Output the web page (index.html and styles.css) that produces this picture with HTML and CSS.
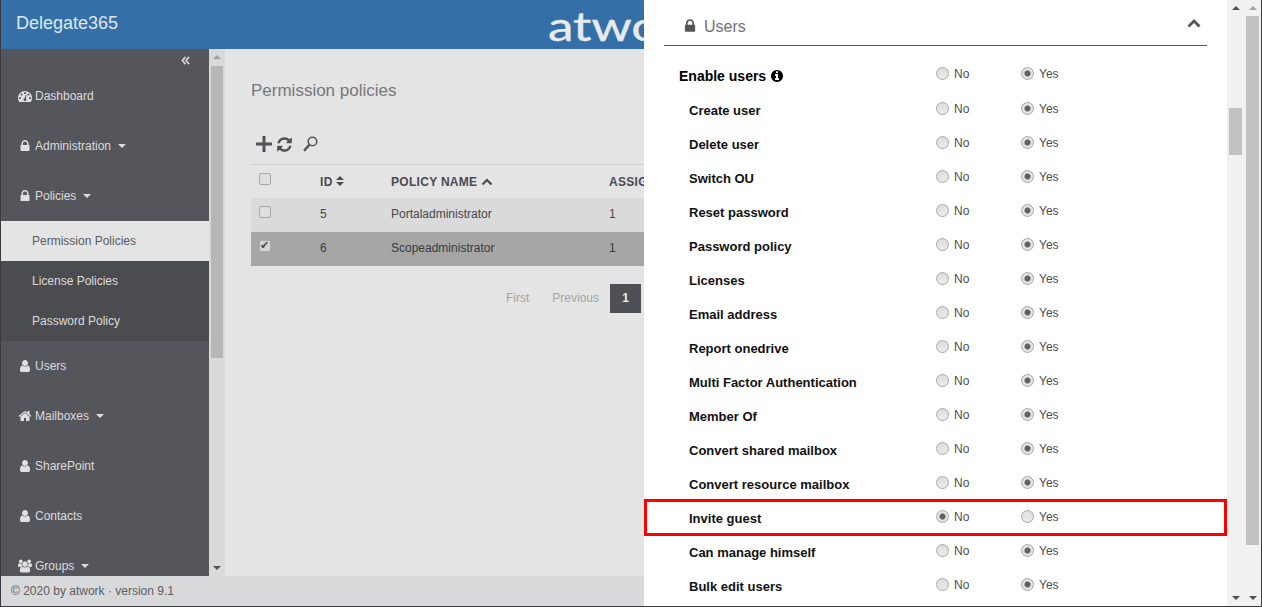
FILE: index.html
```html
<!DOCTYPE html>
<html lang="en">
<head>
<meta charset="utf-8">
<title>Delegate365 - Permission policies</title>
<link rel="stylesheet" href="styles.css">
</head>
<body>
<svg class="defs" aria-hidden="true">
  <symbol id="i-lock" viewBox="0 0 1792 1792"><path d="M640 768h512v-192q0-106-75-181t-181-75-181 75-75 181v192zm832 96v576q0 40-28 68t-68 28h-960q-40 0-68-28t-28-68v-576q0-40 28-68t68-28h32v-192q0-184 132-316t316-132 316 132 132 316v192h32q40 0 68 28t28 68z"/></symbol>
  <symbol id="i-user" viewBox="0 0 1792 1792"><path d="M1536 1399q0 109-62.500 187t-150.500 78h-854q-88 0-150.500-78t-62.500-187q0-85 8.500-160.500t31.500-152 58.500-131 94-89 134.500-34.500q131 128 313 128t313-128q76 0 134.500 34.500t94 89 58.500 131 31.500 152 8.500 160.500zm-256-887q0 159-112.500 271.500t-271.500 112.500-271.500-112.500-112.500-271.500 112.500-271.500 271.500-112.500 271.500 112.500 112.500 271.500z"/></symbol>
  <symbol id="i-home" viewBox="0 0 1792 1792"><path d="M1472 992v480q0 26-19 45t-45 19h-384v-384h-256v384h-384q-26 0-45-19t-19-45v-480q0-1 .5-3t.5-3l575-474 575 474q1 2 1 6zm223-69l-62 74q-8 9-21 11h-3q-13 0-21-7l-692-577-692 577q-12 8-24 7-13-2-21-11l-62-74q-8-10-7-23.500t11-21.500l719-599q32-26 76-26t76 26l244 204v-195q0-14 9-23t23-9h192q14 0 23 9t9 23v408l219 182q10 8 11 21.500t-7 23.500z"/></symbol>
  <symbol id="i-group" viewBox="0 0 1920 1792"><path d="M593 896q-162 5-265 128h-134q-82 0-138-40.500t-56-118.500q0-353 124-353 6 0 43.500 21t97.500 42.500 119 21.500q67 0 133-23-5 37-5 66 0 139 81 256zm1071 637q0 120-73 189.500t-194 69.500h-874q-121 0-194-69.500t-73-189.500q0-53 3.500-103.500t14-109 26.500-108.500 43-97.500 62-81 85.500-53.500 111.500-20q10 0 43 21.500t73 48 107 48 135 21.500 135-21.500 107-48 73-48 43-21.500q61 0 111.500 20t85.500 53.500 62 81 43 97.500 26.500 108.500 14 109 3.500 103.500zm-1024-1277q0 106-75 181t-181 75-181-75-75-181 75-181 181-75 181 75 75 181zm704 384q0 159-112.500 271.500t-271.500 112.500-271.500-112.500-112.500-271.500 112.500-271.500 271.500-112.500 271.500 112.500 112.500 271.500zm576 225q0 78-56 118.500t-138 40.500h-134q-103-123-265-128 81-117 81-256 0-29-5-66 66 23 133 23 59 0 119-21.500t97.500-42.500 43.500-21q124 0 124 353zm-128-609q0 106-75 181t-181 75-181-75-75-181 75-181 181-75 181 75 75 181z"/></symbol>
  <symbol id="i-dash" viewBox="0 0 1792 1792"><path d="M384 1152q0-53-37.500-90.500t-90.500-37.500-90.500 37.500-37.500 90.500 37.500 90.500 90.500 37.500 90.500-37.500 37.500-90.500zm192-448q0-53-37.500-90.500t-90.500-37.500-90.500 37.500-37.500 90.500 37.500 90.500 90.500 37.500 90.500-37.500 37.500-90.500zm428 481l101-382q6-26-7.500-48.500t-38.500-29.500-48 6.500-30 39.500l-101 382q-60 5-107 43.500t-63 98.500q-20 77 20 146t117 89 146-20 89-117q16-60-6-117t-72-91zm660-33q0-53-37.500-90.500t-90.500-37.500-90.500 37.500-37.500 90.500 37.500 90.500 90.500 37.500 90.500-37.500 37.500-90.500zm-640-640q0-53-37.500-90.500t-90.500-37.500-90.500 37.500-37.500 90.500 37.500 90.500 90.500 37.500 90.500-37.500 37.500-90.500zm448 192q0-53-37.500-90.500t-90.500-37.500-90.500 37.500-37.500 90.500 37.500 90.500 90.500 37.500 90.500-37.500 37.500-90.500zm320 448q0 261-141 483-19 29-54 29h-1402q-35 0-54-29-141-221-141-483 0-182 71-348t191-286 286-191 348-71 348 71 286 191 191 286 71 348z"/></symbol>
  <symbol id="i-refresh" viewBox="0 0 1792 1792"><path d="M1639 1056q0 5-1 7-64 268-268 434.500t-478 166.500q-146 0-282.500-55t-243.500-157l-129 129q-19 19-45 19t-45-19-19-45v-448q0-26 19-45t45-19h448q26 0 45 19t19 45-19 45l-137 137q71 66 161 102t187 36q134 0 250-65t186-179q11-17 53-117 8-23 30-23h192q13 0 22.500 9.500t9.500 22.500zm25-800v448q0 26-19 45t-45 19h-448q-26 0-45-19t-19-45 19-45l138-138q-148-137-349-137-134 0-250 65t-186 179q-11 17-53 117-8 23-30 23h-199q-13 0-22.500-9.500t-9.500-22.500v-7q65-268 270-434.500t480-166.500q146 0 284 55.500t245 156.500l130-129q19-19 45-19t45 19 19 45z"/></symbol>
  <symbol id="i-info" viewBox="0 0 1792 1792"><path d="M1152 1376v-160q0-14-9-23t-23-9h-96v-512q0-14-9-23t-23-9h-320q-14 0-23 9t-9 23v160q0 14 9 23t23 9h96v320h-96q-14 0-23 9t-9 23v160q0 14 9 23t23 9h448q14 0 23-9t9-23zm-128-896v-160q0-14-9-23t-23-9h-192q-14 0-23 9t-9 23v160q0 14 9 23t23 9h192q14 0 23-9t9-23zm640 416q0 209-103 385.500t-279.500 279.500-385.500 103-385.500-103-279.500-279.500-103-385.500 103-385.500 279.500-279.500 385.500-103 385.500 103 279.500 279.500 103 385.500z"/></symbol>
</svg>

<div class="window">
  <div class="main">
    <header class="topbar">
      <div class="brand">Delegate365</div>
      <div class="logo">atwork</div>
    </header>
    <div class="workspace">
      <nav class="sidebar">
        <div class="collapse">
          <svg class="collapse-icon" viewBox="0 0 10 10"><path d="M5 1 1.500 5 5 9M9 1 5.500 5 9 9"/></svg>
        </div>
        <a class="nav-item"><svg class="nav-icon"><use href="#i-dash"/></svg>Dashboard</a>
        <a class="nav-item"><svg class="nav-icon"><use href="#i-lock"/></svg>Administration<i class="caret"></i></a>
        <a class="nav-item"><svg class="nav-icon"><use href="#i-lock"/></svg>Policies<i class="caret"></i></a>
        <div class="submenu">
          <a class="sub-item active">Permission Policies</a>
          <a class="sub-item">License Policies</a>
          <a class="sub-item">Password Policy</a>
        </div>
        <a class="nav-item"><svg class="nav-icon"><use href="#i-user"/></svg>Users</a>
        <a class="nav-item"><svg class="nav-icon"><use href="#i-home"/></svg>Mailboxes<i class="caret"></i></a>
        <a class="nav-item"><svg class="nav-icon"><use href="#i-user"/></svg>SharePoint</a>
        <a class="nav-item"><svg class="nav-icon"><use href="#i-user"/></svg>Contacts</a>
        <a class="nav-item"><svg class="nav-icon"><use href="#i-group"/></svg>Groups<i class="caret"></i></a>
      </nav>
      <div class="scrollbar sb-side">
        <i class="arrow up"></i>
        <div class="track"><div class="thumb"></div></div>
        <i class="arrow down"></i>
      </div>
      <main class="content">
        <h1 class="page-title">Permission policies</h1>
        <div class="toolbar">
          <svg class="tool tool-plus" viewBox="0 0 16 16"><path d="M8 0v16M0 8h16"/></svg>
          <svg class="tool tool-refresh"><use href="#i-refresh"/></svg>
          <svg class="tool tool-search" viewBox="0 0 15 16"><circle cx="9.500" cy="5.500" r="4.300"/><path class="handle" d="M6.200 9 1.800 14"/></svg>
        </div>
        <table class="grid">
          <thead>
            <tr>
              <th class="c-check"><input type="checkbox" class="check" disabled></th>
              <th class="c-id">ID <svg class="sort" viewBox="0 0 8 10"><path d="M4 0 8 4H0zM4 10 0 6h8z"/></svg></th>
              <th class="c-name">POLICY NAME <svg class="sort-up" viewBox="0 0 12 8"><path d="M1.500 6.500 6 2l4.500 4.500"/></svg></th>
              <th class="c-assign">ASSIGNED</th>
            </tr>
          </thead>
          <tbody>
            <tr class="odd">
              <td><input type="checkbox" class="check" disabled></td>
              <td>5</td><td>Portaladministrator</td><td>1</td>
            </tr>
            <tr class="selected">
              <td><input type="checkbox" class="check" disabled checked></td>
              <td>6</td><td>Scopeadministrator</td><td>1</td>
            </tr>
          </tbody>
        </table>
        <div class="pager">
          <a class="page-link">First</a>
          <a class="page-link">Previous</a>
          <a class="page-current">1</a>
        </div>
      </main>
    </div>
    <footer class="footer">© 2020 by atwork · version 9.1</footer>
  </div>

  <aside class="panel">
    <div class="panel-head">
      <svg class="panel-lock"><use href="#i-lock"/></svg>
      <span class="panel-title">Users</span>
      <svg class="panel-chevron" viewBox="0 0 14 10"><path d="M1.500 8.500 7 3l5.500 5.500"/></svg>
    </div>
    <form class="perms">
      <div class="perm perm-main"><span class="perm-label">Enable users <svg class="info"><use href="#i-info"/></svg></span>
        <label class="opt"><input class="radio" type="radio" name="r0" disabled>No</label>
        <label class="opt"><input class="radio" type="radio" name="r0" disabled checked>Yes</label></div>
      <div class="perm"><span class="perm-label">Create user</span>
        <label class="opt"><input class="radio" type="radio" name="r1" disabled>No</label>
        <label class="opt"><input class="radio" type="radio" name="r1" disabled checked>Yes</label></div>
      <div class="perm"><span class="perm-label">Delete user</span>
        <label class="opt"><input class="radio" type="radio" name="r2" disabled>No</label>
        <label class="opt"><input class="radio" type="radio" name="r2" disabled checked>Yes</label></div>
      <div class="perm"><span class="perm-label">Switch OU</span>
        <label class="opt"><input class="radio" type="radio" name="r3" disabled>No</label>
        <label class="opt"><input class="radio" type="radio" name="r3" disabled checked>Yes</label></div>
      <div class="perm"><span class="perm-label">Reset password</span>
        <label class="opt"><input class="radio" type="radio" name="r4" disabled>No</label>
        <label class="opt"><input class="radio" type="radio" name="r4" disabled checked>Yes</label></div>
      <div class="perm"><span class="perm-label">Password policy</span>
        <label class="opt"><input class="radio" type="radio" name="r5" disabled>No</label>
        <label class="opt"><input class="radio" type="radio" name="r5" disabled checked>Yes</label></div>
      <div class="perm"><span class="perm-label">Licenses</span>
        <label class="opt"><input class="radio" type="radio" name="r6" disabled>No</label>
        <label class="opt"><input class="radio" type="radio" name="r6" disabled checked>Yes</label></div>
      <div class="perm"><span class="perm-label">Email address</span>
        <label class="opt"><input class="radio" type="radio" name="r7" disabled>No</label>
        <label class="opt"><input class="radio" type="radio" name="r7" disabled checked>Yes</label></div>
      <div class="perm"><span class="perm-label">Report onedrive</span>
        <label class="opt"><input class="radio" type="radio" name="r8" disabled>No</label>
        <label class="opt"><input class="radio" type="radio" name="r8" disabled checked>Yes</label></div>
      <div class="perm"><span class="perm-label">Multi Factor Authentication</span>
        <label class="opt"><input class="radio" type="radio" name="r9" disabled>No</label>
        <label class="opt"><input class="radio" type="radio" name="r9" disabled checked>Yes</label></div>
      <div class="perm"><span class="perm-label">Member Of</span>
        <label class="opt"><input class="radio" type="radio" name="r10" disabled>No</label>
        <label class="opt"><input class="radio" type="radio" name="r10" disabled checked>Yes</label></div>
      <div class="perm"><span class="perm-label">Convert shared mailbox</span>
        <label class="opt"><input class="radio" type="radio" name="r11" disabled>No</label>
        <label class="opt"><input class="radio" type="radio" name="r11" disabled checked>Yes</label></div>
      <div class="perm"><span class="perm-label">Convert resource mailbox</span>
        <label class="opt"><input class="radio" type="radio" name="r12" disabled>No</label>
        <label class="opt"><input class="radio" type="radio" name="r12" disabled checked>Yes</label></div>
      <div class="perm perm-flagged"><span class="perm-label">Invite guest</span>
        <label class="opt"><input class="radio" type="radio" name="r13" disabled checked>No</label>
        <label class="opt"><input class="radio" type="radio" name="r13" disabled>Yes</label></div>
      <div class="perm"><span class="perm-label">Can manage himself</span>
        <label class="opt"><input class="radio" type="radio" name="r14" disabled>No</label>
        <label class="opt"><input class="radio" type="radio" name="r14" disabled checked>Yes</label></div>
      <div class="perm"><span class="perm-label">Bulk edit users</span>
        <label class="opt"><input class="radio" type="radio" name="r15" disabled>No</label>
        <label class="opt"><input class="radio" type="radio" name="r15" disabled checked>Yes</label></div>
    </form>
  </aside>
  <div class="scrollbar sb-panel">
    <i class="arrow up"></i>
    <div class="track"><div class="thumb"></div></div>
    <i class="arrow down"></i>
  </div>
  <div class="scrollbar sb-page">
    <i class="arrow up"></i>
    <div class="track"><div class="thumb"></div></div>
    <i class="arrow down"></i>
  </div>
</div>
</body>
</html>
```
FILE: styles.css
```css
* { box-sizing: border-box; }
html, body { height: 100%; }
body {
  margin: 0;
  padding: 0 1px 1px;
  background: #3a3a3f;
  overflow: hidden;
  font-family: "Liberation Sans", Arial, sans-serif;
  font-size: 12px;
}
.defs { display: none; }
.window { display: flex; height: 606px; width: 1260px; }

/* left page under the panel */
.main { width: 643px; height: 606px; display: flex; flex-direction: column; overflow: hidden; flex: none; }
.topbar { height: 49px; flex: none; display: flex; align-items: center; background: #3470a7; overflow: hidden; }
.brand { flex: 0 0 547px; padding-left: 15px; font-size: 18px; color: #dfe6ee; margin-top: -2px; }
.logo { flex: none; font-family: Lato, sans-serif; font-size: 40px; line-height: 49px; margin-top: 4px; color: #e6ebef; -webkit-text-stroke: .4px #e6ebef; transform-origin: left center; transform: scaleX(1.28); }

.workspace { flex: 1; min-height: 0; display: flex; }
.sidebar { width: 208px; flex: none; background: #55565b; overflow: hidden; }
.collapse { height: 22px; display: flex; justify-content: flex-end; align-items: center; padding-right: 19px; }
.collapse-icon { width: 9px; height: 9px; fill: none; stroke: #d8d8d8; stroke-width: 1.800; }
.nav-item { height: 50px; display: flex; align-items: center; padding-left: 16.500px; color: #dcdcdc; white-space: nowrap; }
.nav-icon { width: 14px; height: 14px; margin-right: 3.500px; fill: #e0e0e0; flex: none; }
.caret { width: 0; height: 0; margin-left: 7px; border: 4.500px solid transparent; border-top-color: #dcdcdc; border-bottom: 0; }
.submenu { background: #4b4c50; }
.sub-item { height: 40px; display: flex; align-items: center; padding-left: 31px; color: #dcdcdc; }
.sub-item.active { background: #e4e4e4; color: #5a5a5f; }

/* scrollbars */
.scrollbar { flex: none; display: flex; flex-direction: column; align-items: center; width: 17px; background: #f1f1f1; }
.arrow { flex: none; width: 0; height: 0; border-left: 4px solid transparent; border-right: 4px solid transparent; }
.arrow.up { margin-top: 6px; border-bottom: 4px solid #a3a3a3; }
.arrow.down { margin-bottom: 6px; border-top: 4px solid #505050; }
.track { flex: 1; width: 100%; padding: 0 2px; }
.thumb { background: #c1c1c1; }
.sb-side { width: 16px; background: #d9d9d9; }
.sb-side .track { margin-top: 7px; }
.sb-side .thumb { height: 292px; background: #b7b7b7; }
.sb-side .arrow.up { border-bottom-color: #a0a0a0; }
.sb-panel .arrow.up { border-bottom-color: #505050; }
.sb-panel .track { padding-top: 98px; }
.sb-panel .thumb { height: 47px; }
.sb-page .track { padding-top: 6px; }
.sb-page .thumb { height: 529px; }

/* content */
.content { flex: 1; min-width: 0; background: #e4e4e4; padding-left: 26px; overflow: hidden; }
.page-title { margin: 32px 0 0; font-size: 17px; font-weight: 400; line-height: 20px; color: #77777b; }
.toolbar { margin-top: 33px; height: 20px; display: flex; align-items: center; padding-left: 5px; }
.tool { flex: none; }
.tool-plus { width: 16px; height: 16px; stroke: #505055; stroke-width: 3; fill: none; }
.tool-refresh { width: 17px; height: 17px; margin-left: 4px; fill: #4f5055; }
.tool-search { width: 15px; height: 16px; margin-left: 10px; fill: none; stroke: #55565b; stroke-width: 1.600; }
.tool-search .handle { stroke-width: 2.600; stroke-linecap: round; }
.grid { margin-top: 10px; width: 540px; border-collapse: collapse; table-layout: fixed; border-top: 1px solid #cfcfcf; color: #47474d; }
.c-check { width: 69px; }
.c-id { width: 71px; }
.c-name { width: 218px; }
.grid th { height: 33px; padding: 2px 0 0; text-align: left; font-weight: 700; letter-spacing: .3px; color: #4a4a55; white-space: nowrap; }
.grid td { height: 34px; padding: 0 0 2px; }
.grid th:first-child, .grid td:first-child { padding-left: 8px; }
.c-assign { letter-spacing: .6px; }
.odd { background: #dadada; }
.selected { background: #a6a6a6; color: #3a3a3e; }
.check { appearance: none; display: block; width: 12px; height: 12px; margin: -4px 0 0; border: 1px solid #a9a9a9; border-radius: 2px; background: #dfdfdf; position: relative; }
.grid th .check { margin-top: -6px; }
.selected .check { background: #d3d3d3; border-color: #a9a9a9; }
.check:checked::before { content: "✔"; position: absolute; left: 0; top: -2px; font: 11px/13px "DejaVu Sans", sans-serif; color: #4a4a4a; }
.sort { width: 8px; height: 10px; fill: #4a4a55; }
.sort-up { width: 12px; height: 8px; fill: none; stroke: #4a4a55; stroke-width: 2.200; }
.pager { margin-top: 18px; height: 29px; display: flex; align-items: center; padding-left: 255px; color: #a4a4a4; }
.page-link { margin-right: 23px; }
.page-link + .page-link { margin-right: 11px; }
.page-current { width: 31px; height: 29px; display: flex; align-items: center; justify-content: center; background: #4f5055; color: #f0f0f0; font-weight: 700; }
.footer { height: 30px; flex: none; padding-left: 10px; line-height: 30px; background: #d8d9da; color: #5c5c60; }

/* right panel */
.panel { width: 583px; flex: none; height: 606px; background: #fff; padding: 0 20px; overflow: hidden; }
.panel-head { height: 46px; display: flex; align-items: center; padding: 7px 6px 0 18px; border-bottom: 1px solid #55565b; }
.panel-lock { width: 16px; height: 16px; fill: #55565b; flex: none; margin-right: 6px; }
.panel-title { padding-top: 2px; font-size: 16px; color: #70707a; }
.panel-chevron { width: 14px; height: 10px; margin: -6px 0 0 auto; fill: none; stroke: #55565b; stroke-width: 2.800; }
.perms { margin-top: 13px; }
.perm { position: relative; height: 34px; display: grid; grid-template-columns: 272px 85px 1fr; align-items: center; }
.perm-label { padding-left: 25px; font-size: 13px; font-weight: 700; color: #111; white-space: nowrap; }
.perm-main .perm-label { padding-left: 15px; font-size: 14px; color: #000; }
.info { width: 14px; height: 14px; fill: #000; vertical-align: -2px; }
.opt { display: flex; align-items: center; margin-bottom: 3px; color: #4c4c52; }
.perm-main .opt { margin-bottom: 5px; }
.radio { appearance: none; width: 13px; height: 13px; margin: -1px 5px 0 0; border: 1px solid #a8a8a8; border-radius: 50%; background: linear-gradient(#dcdcdc, #ececec); flex: none; }
.radio:checked { background: radial-gradient(circle, #606060 0 2.500px, #e2e2e2 3.500px); }
.perm-flagged::after { content: ""; position: absolute; left: -20px; right: -20px; top: -2px; bottom: -1px; border: 3px solid #f00; pointer-events: none; }
```
